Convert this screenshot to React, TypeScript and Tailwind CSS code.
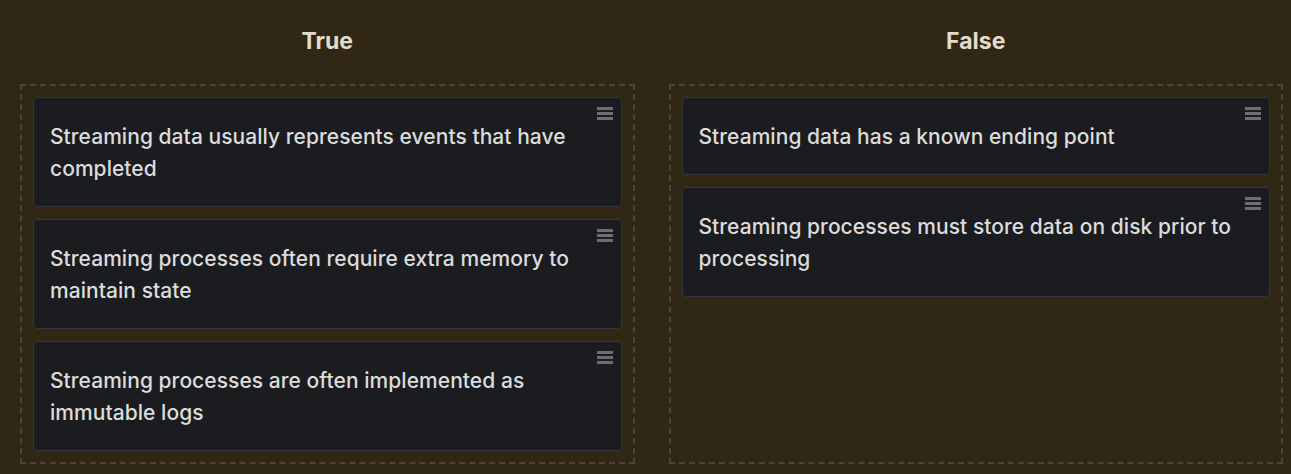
const COLUMNS: { title: string; items: string[] }[] = [
  {
    title: "True",
    items: [
      "Streaming data usually represents events that have completed",
      "Streaming processes often require extra memory to maintain state",
      "Streaming processes are often implemented as immutable logs",
    ],
  },
  {
    title: "False",
    items: [
      "Streaming data has a known ending point",
      "Streaming processes must store data on disk prior to processing",
    ],
  },
];

function Handle() {
  return (
    <div className="absolute top-[9px] right-[8px] flex w-[16px] flex-col gap-[2px]">
      <span className="h-[3px] bg-[#6e6e6e]" />
      <span className="h-[3px] bg-[#6e6e6e]" />
      <span className="h-[3px] bg-[#6e6e6e]" />
    </div>
  );
}

function Card({ text }: { text: string }) {
  return (
    <div className="relative rounded-[4px] border border-[#35363a] bg-[#1b1c1f] pt-[23px] pb-[21px] pl-[16px] pr-[24px]">
      <Handle />
      <p className="text-[21px] font-medium leading-[32px] tracking-[0.05px] text-[#dcdcdc]">{text}</p>
    </div>
  );
}

export default function App() {
  return (
    <div
      className="min-h-[474px] bg-[#302714] pl-[20px] pr-[8px] pb-[11px]"
      style={{ fontFamily: "Inter, 'Noto Sans', sans-serif" }}
    >
      <div className="grid grid-cols-2 gap-x-[34px]">
        {COLUMNS.map(c => (
          <div key={c.title} className="flex h-[84px] items-center justify-center pb-[2px]">
            <h2 className="text-[23px] font-bold text-[#e3dccd]">{c.title}</h2>
          </div>
        ))}
        {COLUMNS.map(c => (
          <div key={c.title + "-box"} className="flex flex-col gap-[12px] border-2 border-dashed border-[#4e4633] p-[11px]">
            {c.items.map(t => <Card key={t} text={t} />)}
          </div>
        ))}
      </div>
    </div>
  );
}
